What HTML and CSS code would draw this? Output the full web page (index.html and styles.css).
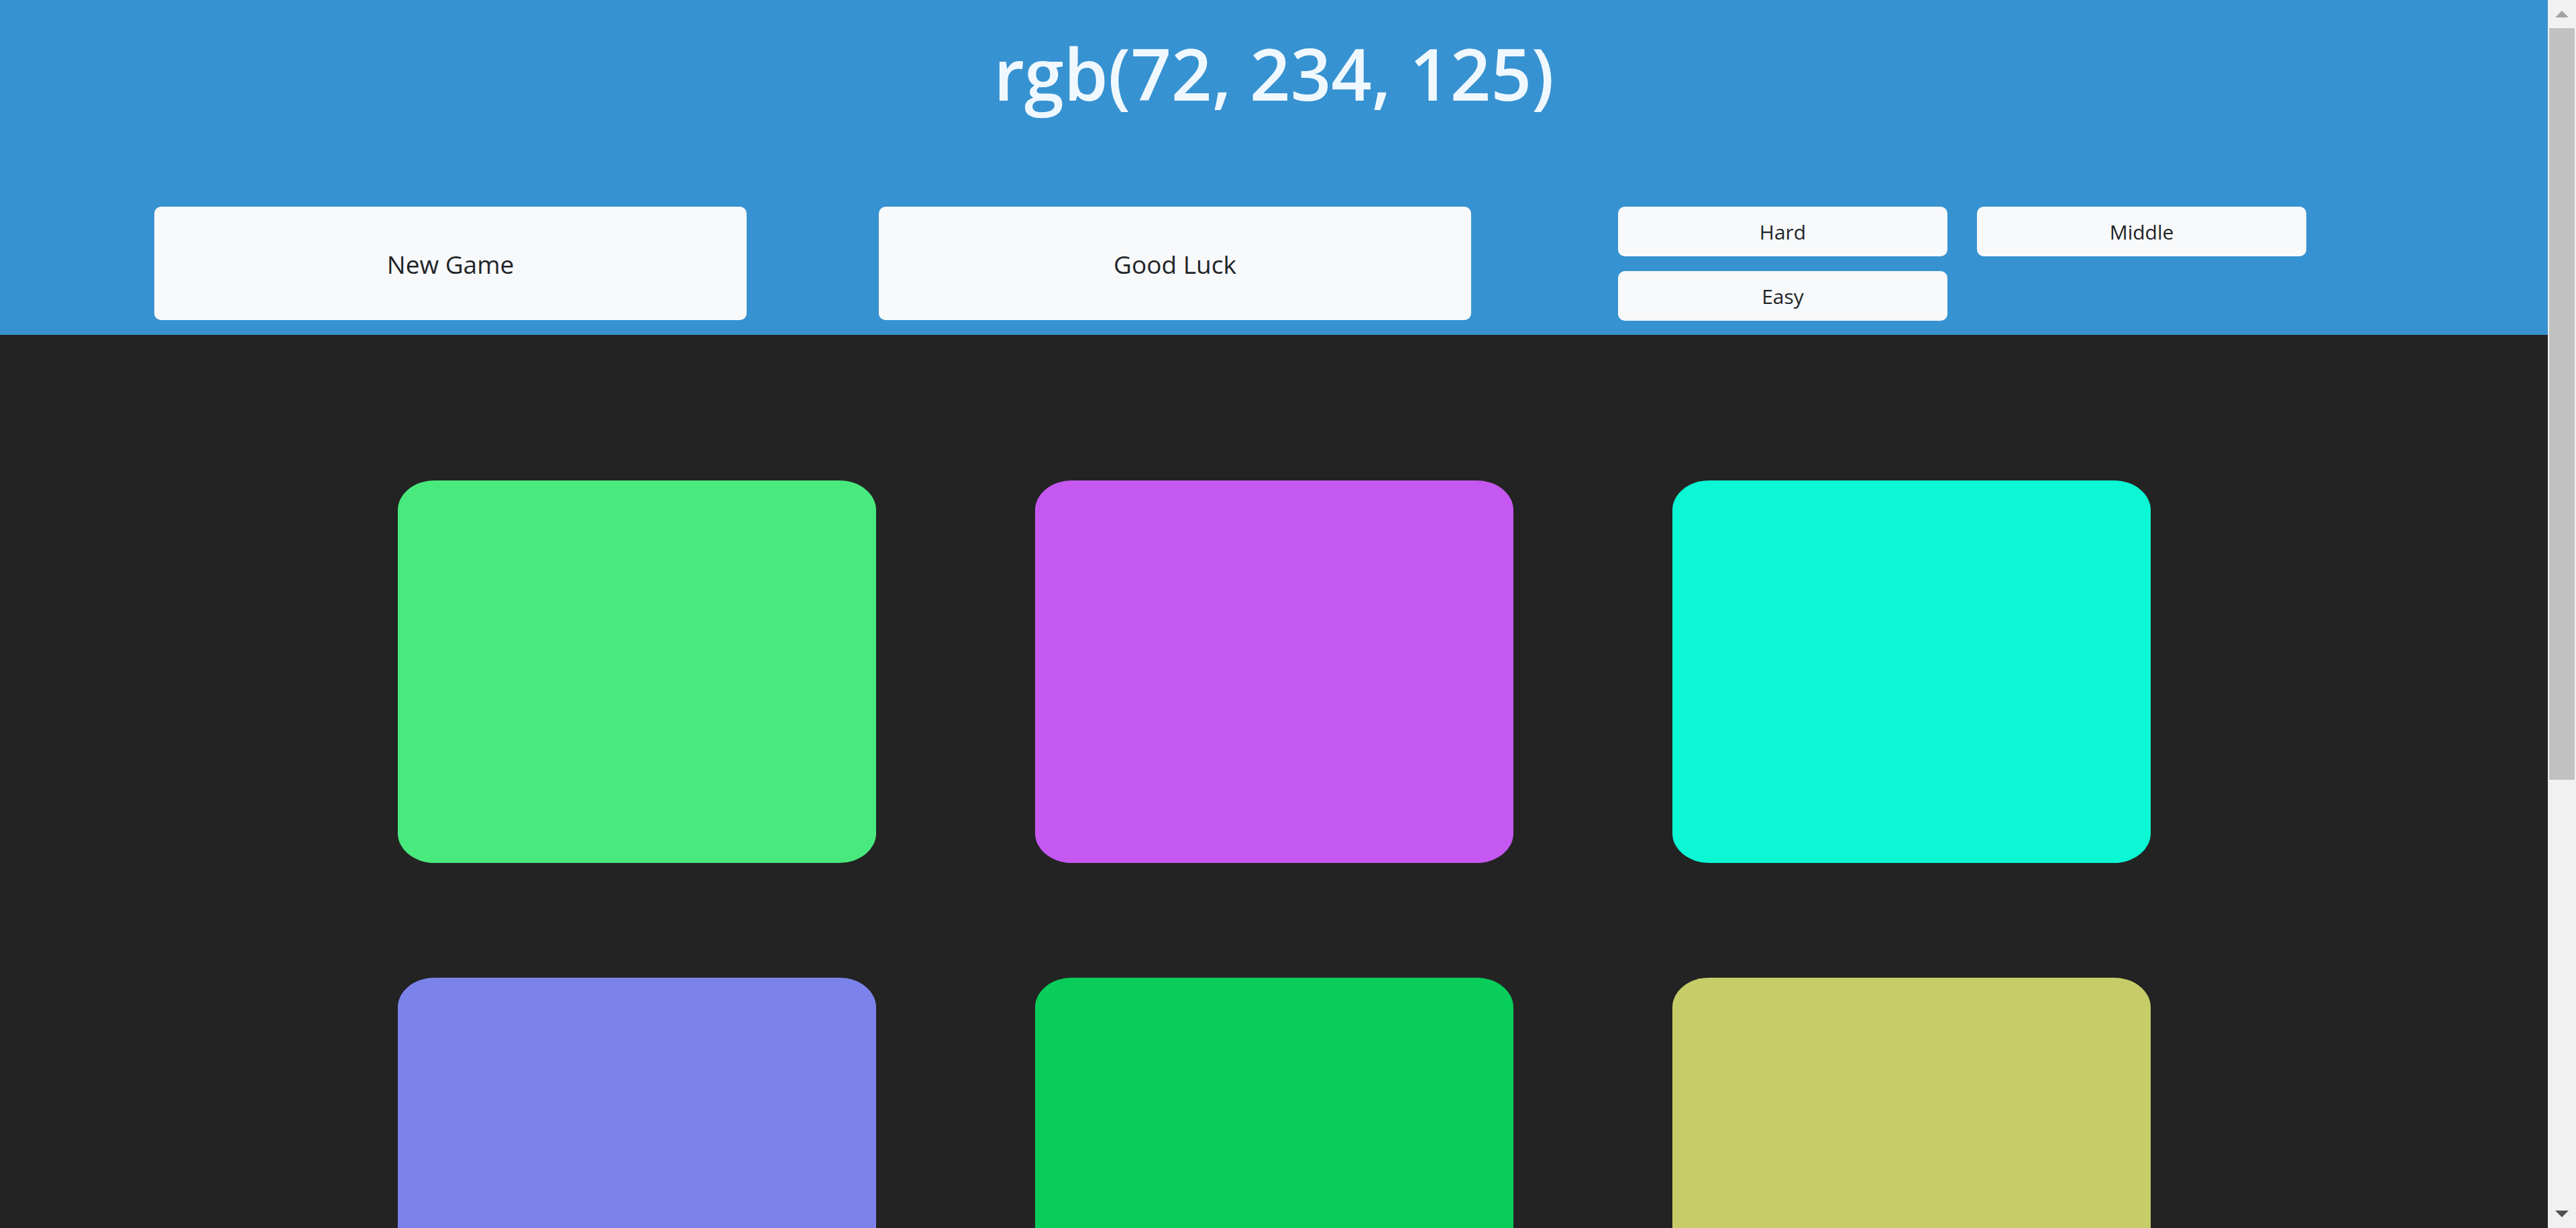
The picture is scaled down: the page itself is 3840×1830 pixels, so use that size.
FILE: index.html
```html
<!DOCTYPE html>
<html lang="en">
<head>
<meta charset="utf-8">
<title>Color Game</title>
<link rel="stylesheet" href="styles.css">
</head>
<body>
<div class="page">
  <main class="main">
    <header class="header">
      <h1 class="title">rgb(72, 234, 125)</h1>
      <div class="controls">
        <button class="btn btn-big">New Game</button>
        <button class="btn btn-big btn-msg">Good Luck</button>
        <div class="levels">
          <button class="btn btn-small">Hard</button>
          <button class="btn btn-small">Middle</button>
          <button class="btn btn-small">Easy</button>
        </div>
      </div>
    </header>
    <section class="board">
      <div class="tile" style="background: rgb(72, 234, 125)"></div>
      <div class="tile" style="background: rgb(197, 88, 240)"></div>
      <div class="tile" style="background: rgb(12, 247, 212)"></div>
      <div class="tile" style="background: rgb(123, 131, 235)"></div>
      <div class="tile" style="background: rgb(8, 205, 90)"></div>
      <div class="tile" style="background: rgb(198, 205, 104)"></div>
    </section>
  </main>
  <aside class="scrollbar">
    <div class="sb-arrow sb-up"></div>
    <div class="sb-thumb"></div>
    <div class="sb-track"></div>
    <div class="sb-arrow sb-down"></div>
  </aside>
</div>
</body>
</html>
```
FILE: styles.css
```css
* { box-sizing: border-box; }
html, body {
  margin: 0;
  padding: 0;
  height: 1830px;
  overflow: hidden;
}
body {
  font-family: "Open Sans", "Noto Sans", sans-serif;
  background: #232323;
}
.page {
  display: flex;
  height: 1830px;
}
.main {
  flex: 1;
  height: 1830px;
  overflow: hidden;
  background: #232323;
}
.header {
  background: #3792d1;
  height: 499px;
  padding-top: 46px;
}
.title {
  margin: 0;
  text-align: center;
  color: #f0f8ff;
  font-size: 106px;
  font-weight: 600;
  line-height: 1.2;
  height: 132px;
}
.controls {
  margin-top: 130px;
  display: flex;
  padding-left: 230px;
  align-items: flex-start;
}
.btn {
  border: none;
  background: #f8f9fa;
  color: #212529;
  font-family: "Open Sans", "Noto Sans", sans-serif;
  border-radius: 10px;
  display: flex;
  align-items: center;
  justify-content: center;
  padding: 0;
}
.btn-big {
  width: 883px;
  height: 169px;
  font-size: 37px;
  padding-top: 2px;
}
.btn-msg {
  margin-left: 197px;
}
.levels {
  margin-left: 219px;
  display: grid;
  grid-template-columns: 491px 491px;
  grid-auto-rows: 74px;
  column-gap: 44px;
  row-gap: 22px;
}
.btn-small {
  font-size: 30px;
}
.board {
  display: grid;
  grid-template-columns: repeat(3, 713px);
  grid-auto-rows: 570px;
  column-gap: 237px;
  row-gap: 171px;
  justify-content: center;
  padding-top: 217px;
}
.tile {
  border-radius: 55px / 44px;
}
.scrollbar {
  width: 42px;
  height: 1830px;
  background: #f1f1f1;
  display: flex;
  flex-direction: column;
  align-items: center;
}
.sb-arrow {
  width: 42px;
  height: 42px;
  display: flex;
  align-items: center;
  justify-content: center;
  flex: none;
}
.sb-up::before {
  content: "";
  border-left: 10px solid transparent;
  border-right: 10px solid transparent;
  border-bottom: 10px solid #a3a3a3;
}
.sb-down::before {
  content: "";
  border-left: 10px solid transparent;
  border-right: 10px solid transparent;
  border-top: 10px solid #505050;
}
.sb-thumb {
  width: 38px;
  height: 1120px;
  background: #c1c1c1;
  flex: none;
}
.sb-track {
  flex: 1;
}
```
